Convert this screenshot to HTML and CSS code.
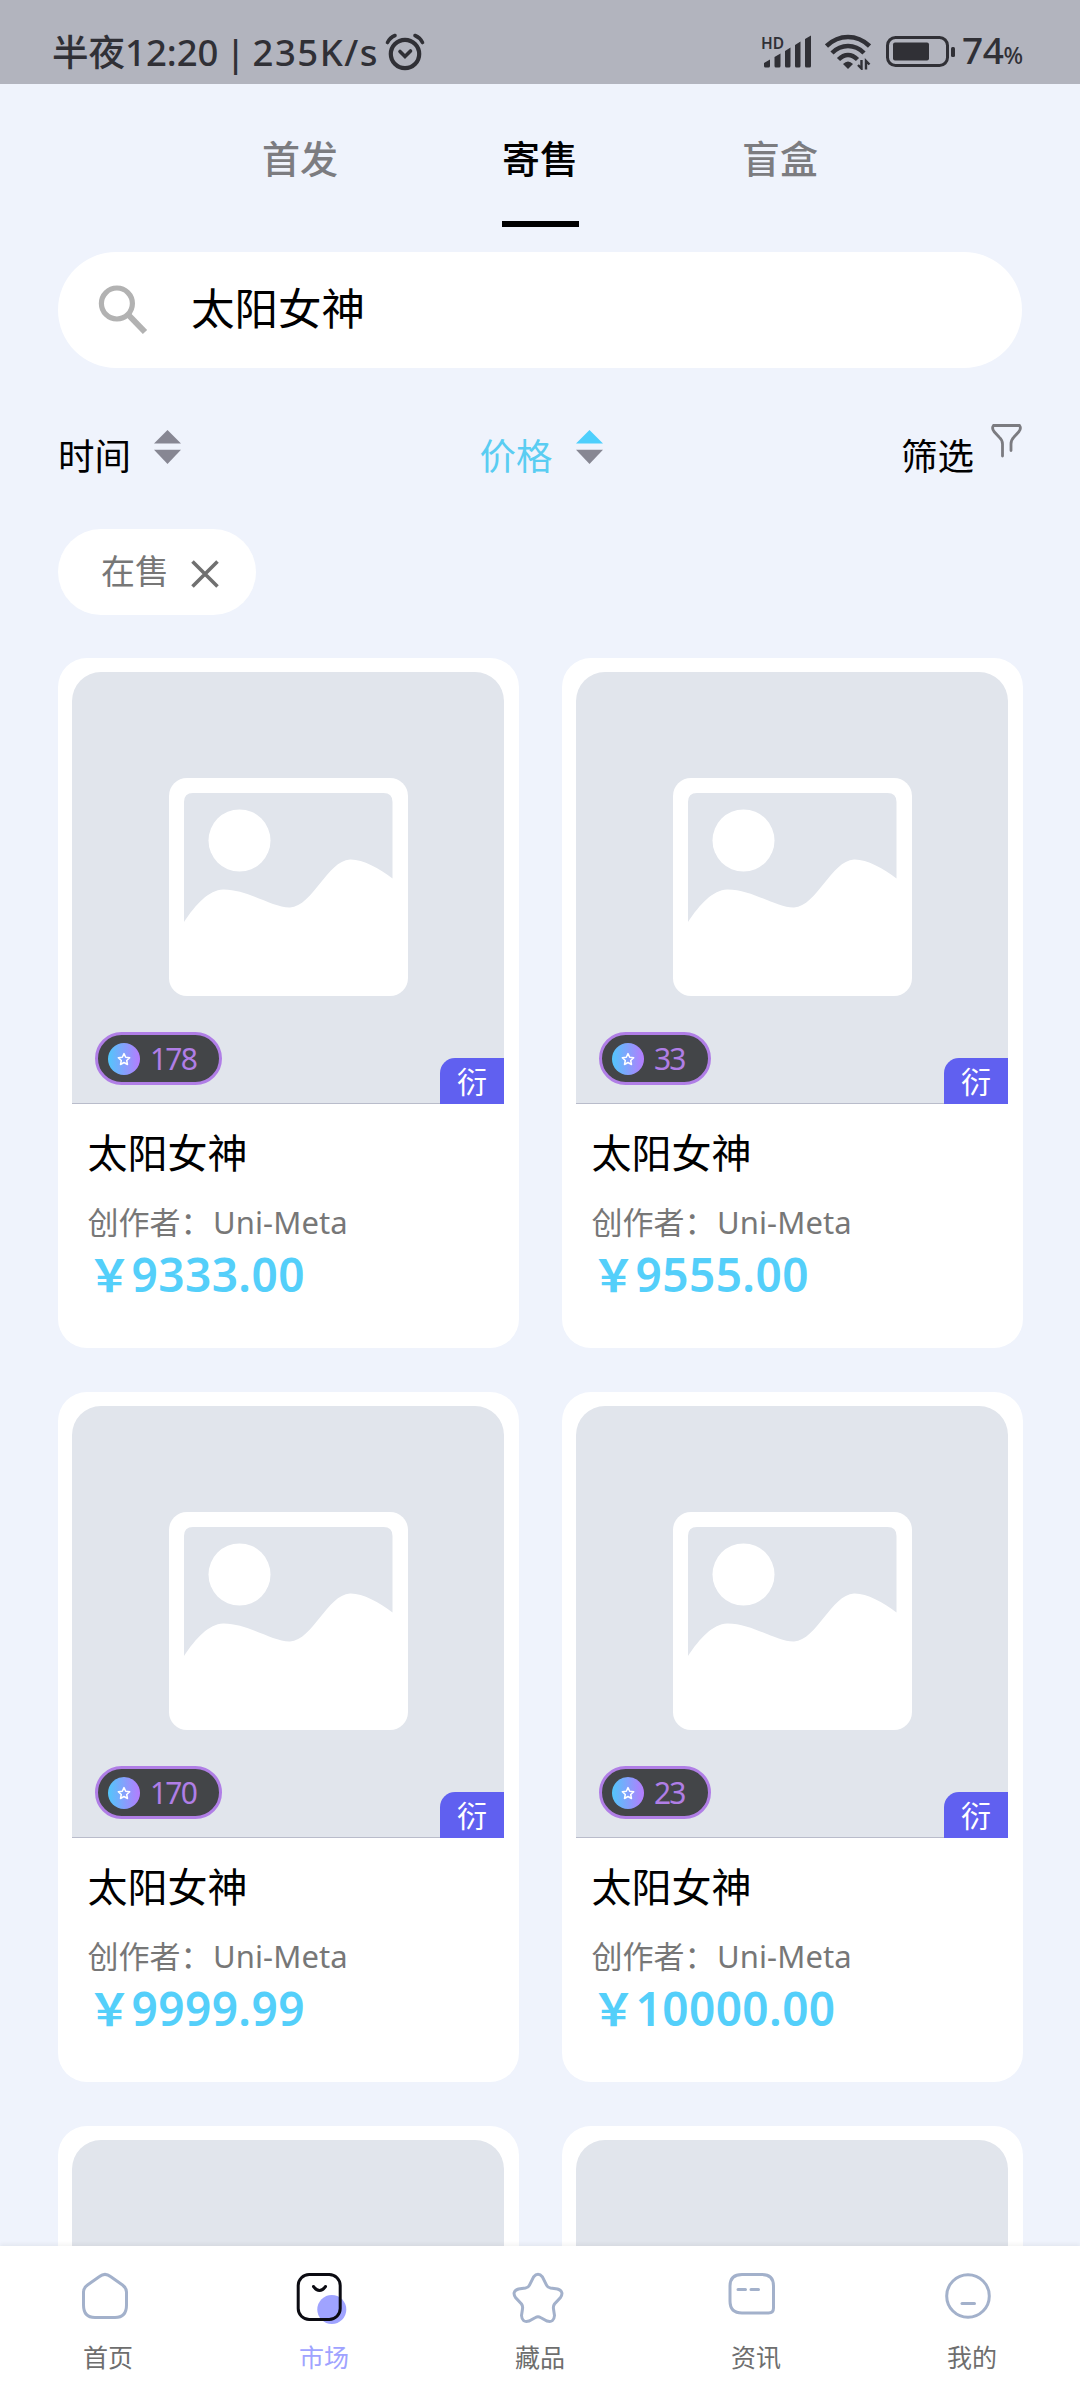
FILE: index.html
```html
<!DOCTYPE html>
<html lang="zh-CN">
<head>
<meta charset="utf-8">
<title>市场</title>
<link rel="stylesheet" href="styles.css">
</head>
<body>
<svg class="defs" width="0" height="0" aria-hidden="true">
  <defs>
    <linearGradient id="coin" x1="0" y1="0" x2="1" y2="0"><stop offset="0" stop-color="#52c6fb"/><stop offset="1" stop-color="#b57cfd"/></linearGradient>
    <symbol id="placeholder" viewBox="0 0 239 218">
      <rect width="239" height="218" rx="18" fill="#fff"/>
      <path d="M15 144V24q0-9 9-9H214.500q9 0 9 9V100.500C210 90 193 81 181 81.500C158 83 144 128 121 129.500C104 130 78 111 54 111.500C40 112 27 126 15 144Z" fill="#e1e5ec"/>
      <circle cx="70.500" cy="62.500" r="31" fill="#fff"/>
    </symbol>
    <symbol id="star-coin" viewBox="0 0 32 32">
      <circle cx="16" cy="16" r="16" fill="url(#coin)"/>
      <path d="M16 10.600l1.700 3.700 4 .5-3 2.700.8 4-3.500-2-3.500 2 .8-4-3-2.700 4-.5z" fill="none" stroke="#fff" stroke-width="1.500" stroke-linejoin="round"/>
    </symbol>
    <symbol id="sort" viewBox="0 0 27 34">
      <path class="up" d="M13.500 0L27 13.500H0z"/>
      <path class="down" d="M13.500 34L27 19.800H0z"/>
    </symbol>
  </defs>
</svg>
<div class="screen">
  <header class="status">
    <div class="status-left">
      <span class="clock">半夜12:20 | <span class="speed">235K/s</span></span>
      <svg class="alarm" width="40" height="38" viewBox="0 0 40 38" fill="none" stroke="#303036" stroke-linecap="round">
        <circle cx="20" cy="21" r="14.200" stroke-width="4.200"/>
        <path d="M2.500 9.500Q5 4.500 10 2.500M37.500 9.500Q35 4.500 30 2.500" stroke-width="3.600"/>
        <path d="M15 18.500l5 5 5.500-5.500" stroke-width="3.600"/>
      </svg>
    </div>
    <div class="status-right">
      <svg class="signal" width="51" height="36" viewBox="0 0 51 36" fill="#303036">
        <text x="0" y="15" class="hd">HD</text>
        <path d="M3 29l6-3.500V32q0 1.500-1.500 1.500H4.500Q3 33.500 3 32zM13.500 23l6-3.500V32q0 1.500-1.500 1.500h-3q-1.500 0-1.500-1.500zM24 17l5.500-3.500V32q0 1.500-1.500 1.500h-2.500Q24 33.500 24 32zM34 11l5.500-3.500V32q0 1.500-1.500 1.500h-2.500Q34 33.500 34 32zM44 5l6-3.500V32q0 1.500-1.500 1.500h-3Q44 33.500 44 32z"/>
      </svg>
      <svg class="wifi" width="46" height="36" viewBox="0 0 46 36" fill="none" stroke="#303036" stroke-width="4.500">
        <path d="M1.500 12Q11 3 23 3t21.500 9M7 19Q14 12 23 12t16 7M13.500 25.500Q18 21 23 21t9.500 4.500"/>
        <path d="M18 30q5-5 10 0l-5 5z" fill="#303036" stroke="none"/>
        <path d="M36.500 26v8.500l-3.500-3.500M41 35.500V27l3.500 3.500" stroke-width="2.400"/>
      </svg>
      <svg class="battery" width="69" height="32" viewBox="0 0 69 32" fill="none">
        <rect x="1.500" y="1.500" width="60" height="28" rx="8" stroke="#303036" stroke-width="3"/>
        <rect x="7" y="6.500" width="36" height="18" rx="2" fill="#303036"/>
        <rect x="65" y="11" width="4" height="10" rx="1.500" fill="#303036"/>
      </svg>
      <span class="level">74<small>%</small></span>
    </div>
  </header>

  <nav class="tabs">
    <a class="tab">首发</a>
    <a class="tab active">寄售</a>
    <a class="tab">盲盒</a>
  </nav>

  <div class="search">
    <svg width="50" height="50" viewBox="0 0 50 50" fill="none" stroke="#b2b2b2" stroke-width="5.200">
      <circle cx="18.900" cy="18.500" r="15.500"/><path d="M30.500 30L47 47" stroke-width="6"/>
    </svg>
    <span>太阳女神</span>
  </div>

  <div class="sorts">
    <div class="sort"><span>时间</span><svg class="arrows" width="27" height="34"><use href="#sort"/></svg></div>
    <div class="sort selected"><span>价格</span><svg class="arrows" width="27" height="34"><use href="#sort"/></svg></div>
    <div class="sort filter"><span>筛选</span>
      <svg width="31" height="34" viewBox="0 0 31 34" fill="none" stroke="#7b7b80" stroke-width="2.800" stroke-linecap="round">
        <path d="M11.500 32V20Q11.500 16 8 13L3 7.500Q.5 4 2.500 1.500H28.500Q30.500 4 28 7.500L23 13Q20 16 20 20V26.500"/>
      </svg>
    </div>
  </div>

  <div class="chip"><span>在售</span>
    <svg width="28" height="28" viewBox="0 0 28 28" stroke="#707070" stroke-width="3.600"><path d="M1.500 1.500l25 25M26.500 1.500l-25 25"/></svg>
  </div>

  <main class="grid">
    <article class="card">
      <div class="cover">
        <svg class="pic" width="239" height="218"><use href="#placeholder"/></svg>
        <div class="badge"><svg width="32" height="32"><use href="#star-coin"/></svg><span>178</span></div>
        <div class="tag">衍</div>
      </div>
      <h3>太阳女神</h3>
      <p class="creator">创作者：<span>Uni-Meta</span></p>
      <p class="price">￥<span>9333.00</span></p>
    </article>
    <article class="card">
      <div class="cover">
        <svg class="pic" width="239" height="218"><use href="#placeholder"/></svg>
        <div class="badge"><svg width="32" height="32"><use href="#star-coin"/></svg><span>33</span></div>
        <div class="tag">衍</div>
      </div>
      <h3>太阳女神</h3>
      <p class="creator">创作者：<span>Uni-Meta</span></p>
      <p class="price">￥<span>9555.00</span></p>
    </article>
    <article class="card">
      <div class="cover">
        <svg class="pic" width="239" height="218"><use href="#placeholder"/></svg>
        <div class="badge"><svg width="32" height="32"><use href="#star-coin"/></svg><span>170</span></div>
        <div class="tag">衍</div>
      </div>
      <h3>太阳女神</h3>
      <p class="creator">创作者：<span>Uni-Meta</span></p>
      <p class="price">￥<span>9999.99</span></p>
    </article>
    <article class="card">
      <div class="cover">
        <svg class="pic" width="239" height="218"><use href="#placeholder"/></svg>
        <div class="badge"><svg width="32" height="32"><use href="#star-coin"/></svg><span>23</span></div>
        <div class="tag">衍</div>
      </div>
      <h3>太阳女神</h3>
      <p class="creator">创作者：<span>Uni-Meta</span></p>
      <p class="price">￥<span>10000.00</span></p>
    </article>
    <article class="card"><div class="cover"></div></article>
    <article class="card"><div class="cover"></div></article>
  </main>

  <footer class="tabbar">
    <a class="item">
      <svg width="54" height="54" viewBox="0 0 54 54"><path d="M20.500 5.500Q26 1.200 31.500 5.500L43.500 14Q47.500 17 47.500 21V34Q47.500 46.500 36 46.500H16Q4.500 46.500 4.500 34V21Q4.500 17 8.500 14Z"/></svg>
      <span>首页</span>
    </a>
    <a class="item current">
      <svg width="54" height="54" viewBox="0 0 54 54"><circle cx="36.800" cy="38.500" r="14.500" fill="#9fa3ff" stroke="none"/><rect x="3.200" y="3.500" width="42" height="45" rx="11" stroke="#0b0b12" stroke-width="3"/><path d="M18.500 15.500q6 8 12 0" stroke="#0b0b12" stroke-width="3"/></svg>
      <span>市场</span>
    </a>
    <a class="item">
      <svg width="54" height="54" viewBox="0 0 54 54"><path d="M22.500 6Q27 .5 31.500 6L35.500 14Q36.500 16.500 39.500 17L46.500 18Q53.500 20.500 49.500 26.500L43.500 33Q42 35 42.500 38L43.500 44.500Q43 52 36 50L29.500 46.500Q27 45 24.500 46.500L18 50Q11 52 10.500 44.500L11.500 38Q12 35 10.500 33L4.500 26.500Q.5 20.500 7.500 18L14.500 17Q17.500 16.500 18.500 14Z"/></svg>
      <span>藏品</span>
    </a>
    <a class="item">
      <svg width="54" height="54" viewBox="0 0 54 54"><path d="M15 3.500H35Q46.500 3.500 46.500 15V37Q46.500 42 41.500 42H15Q3 42 3 30V15Q3 3.500 15 3.500ZM11 18.500h7.500M24 18.500h7.500"/></svg>
      <span>资讯</span>
    </a>
    <a class="item">
      <svg width="54" height="54" viewBox="0 0 54 54"><circle cx="25" cy="25" r="21.300"/><path d="M19 32.500h12.500"/></svg>
      <span>我的</span>
    </a>
  </footer>
</div>
</body>
</html>
```

FILE: styles.css
```css
* { box-sizing: border-box; }
body {
  margin: 0;
  background: #eff3fc;
  font-family: "Noto Sans", "Noto Sans CJK SC", sans-serif;
  color: #000;
}
svg { display: block; flex: none; }
.defs { position: absolute; }
.screen { width: 1080px; height: 2400px; overflow: hidden; display: flex; flex-direction: column; }

.status {
  flex: none;
  height: 84px;
  padding: 20px 57px 0 52px;
  display: flex;
  justify-content: space-between;
  background: #b2b4be;
  color: #303036;
}
.status-left, .status-right { display: flex; align-items: center; height: 64px; }
.clock { font-size: 36.500px; font-weight: 500; line-height: 64px; white-space: nowrap; width: 333px; word-spacing: -2.500px; }
.speed { letter-spacing: 1.500px; }
.status-right { gap: 13px; }
.signal { overflow: visible; }
.hd { font-size: 15.500px; font-weight: 600; }
.battery { margin-left: 2px; }
.level { font-size: 37px; font-weight: 500; line-height: 66px; margin-left: -6px; letter-spacing: -.5px; }
.level small { font-size: 23px; letter-spacing: 0; }

.tabs { flex: none; height: 168px; padding: 0 180px; display: flex; }
.tab {
  flex: 1;
  height: 143px;
  display: flex;
  justify-content: center;
  position: relative;
  font-size: 38px;
  font-weight: 500;
  line-height: 148px;
  color: #7c7c80;
}
.tab.active { color: #000; }
.tab.active::after { content: ""; position: absolute; left: 82px; bottom: 0; width: 77px; height: 6px; background: #000; }

.search {
  flex: none;
  height: 116px;
  margin: 0 58px;
  padding-left: 40px;
  border-radius: 58px;
  background: #fff;
  display: flex;
  align-items: center;
  gap: 43px;
  font-size: 43.500px;
}
.search span { padding-bottom: 7px; }

.sorts {
  flex: none;
  height: 161px;
  margin: 0 58px;
  display: flex;
  justify-content: space-between;
  align-items: center;
  font-size: 36.500px;
}
.sort { display: flex; align-items: center; gap: 23px; height: 60px; padding-top: 12px; }
.sort svg { margin-top: -16px; }
.filter { gap: 17px; }
.filter svg { margin-top: -28px; }
.arrows { fill: #878793; }
.selected { color: #5acdf2; }
.selected .arrows { --up: #4ecffc; }
.up { fill: var(--up, #878793); }

.chip {
  flex: none;
  width: 198px;
  height: 86px;
  margin: 0 58px 43px;
  padding-left: 43px;
  border-radius: 43px;
  background: #fff;
  display: flex;
  align-items: center;
  gap: 22px;
  font-size: 34px;
  line-height: 82px;
  color: #777;
}
.chip span { padding-bottom: 3px; }
.chip svg { margin-top: 4px; }

.grid {
  flex: 1;
  min-height: 0;
  overflow: hidden;
  padding: 0 57px 0 58px;
  display: grid;
  grid-template-columns: 461px 461px;
  grid-auto-rows: 690px;
  justify-content: space-between;
  row-gap: 44px;
}
.card { background: #fff; border-radius: 29px; padding: 14px 15px 0 14px; }
.cover {
  position: relative;
  height: 432px;
  border-radius: 29px 29px 0 0;
  border-bottom: 1px solid #b9bccb;
  background: #e1e5ec;
  padding: 106px 0 0 97px;
}
.badge {
  position: absolute;
  left: 23px;
  bottom: 18px;
  height: 53px;
  padding: 0 23px 0 10px;
  border: 3px solid #b07ee6;
  border-radius: 27px;
  background: #434548;
  display: flex;
  align-items: center;
  gap: 10px;
  color: #b07ee6;
  font-size: 30px;
  font-weight: 400;
  letter-spacing: -1.800px;
}
.tag {
  position: absolute;
  right: 0;
  bottom: -1px;
  width: 64px;
  height: 46px;
  border-radius: 15px 0 0 0;
  background: #6060f0;
  color: #fff;
  font-size: 30px;
  line-height: 48px;
  text-align: center;
}
h3 { margin: 19.500px 0 0 15.500px; font-size: 40px; font-weight: 400; line-height: 58px; }
.creator { margin: 18.500px 0 0 15.500px; font-size: 31px; line-height: 44px; color: #777; }
.creator span { margin-left: 1.500px; letter-spacing: .1px; }
.price { margin: 0 0 0 15.500px; font-size: 44px; font-weight: 700; line-height: 60px; color: #54cffa; white-space: nowrap; }
.price span { font-size: 46px; font-weight: 600; letter-spacing: .4px; }

.tabbar { flex: none; height: 154px; background: #fff; display: flex; box-shadow: 0 -2px 4px rgba(0, 0, 0, .05); position: relative; }
.item { flex: 1; padding-top: 25px; display: flex; flex-direction: column; align-items: center; font-size: 25px; line-height: 36px; color: #6e6e6e; gap: 14px; }
.item svg { margin-right: 4px; fill: none; stroke: #a3b1cb; stroke-width: 3; stroke-linecap: round; }
.current { color: #9fa3ff; }
```
